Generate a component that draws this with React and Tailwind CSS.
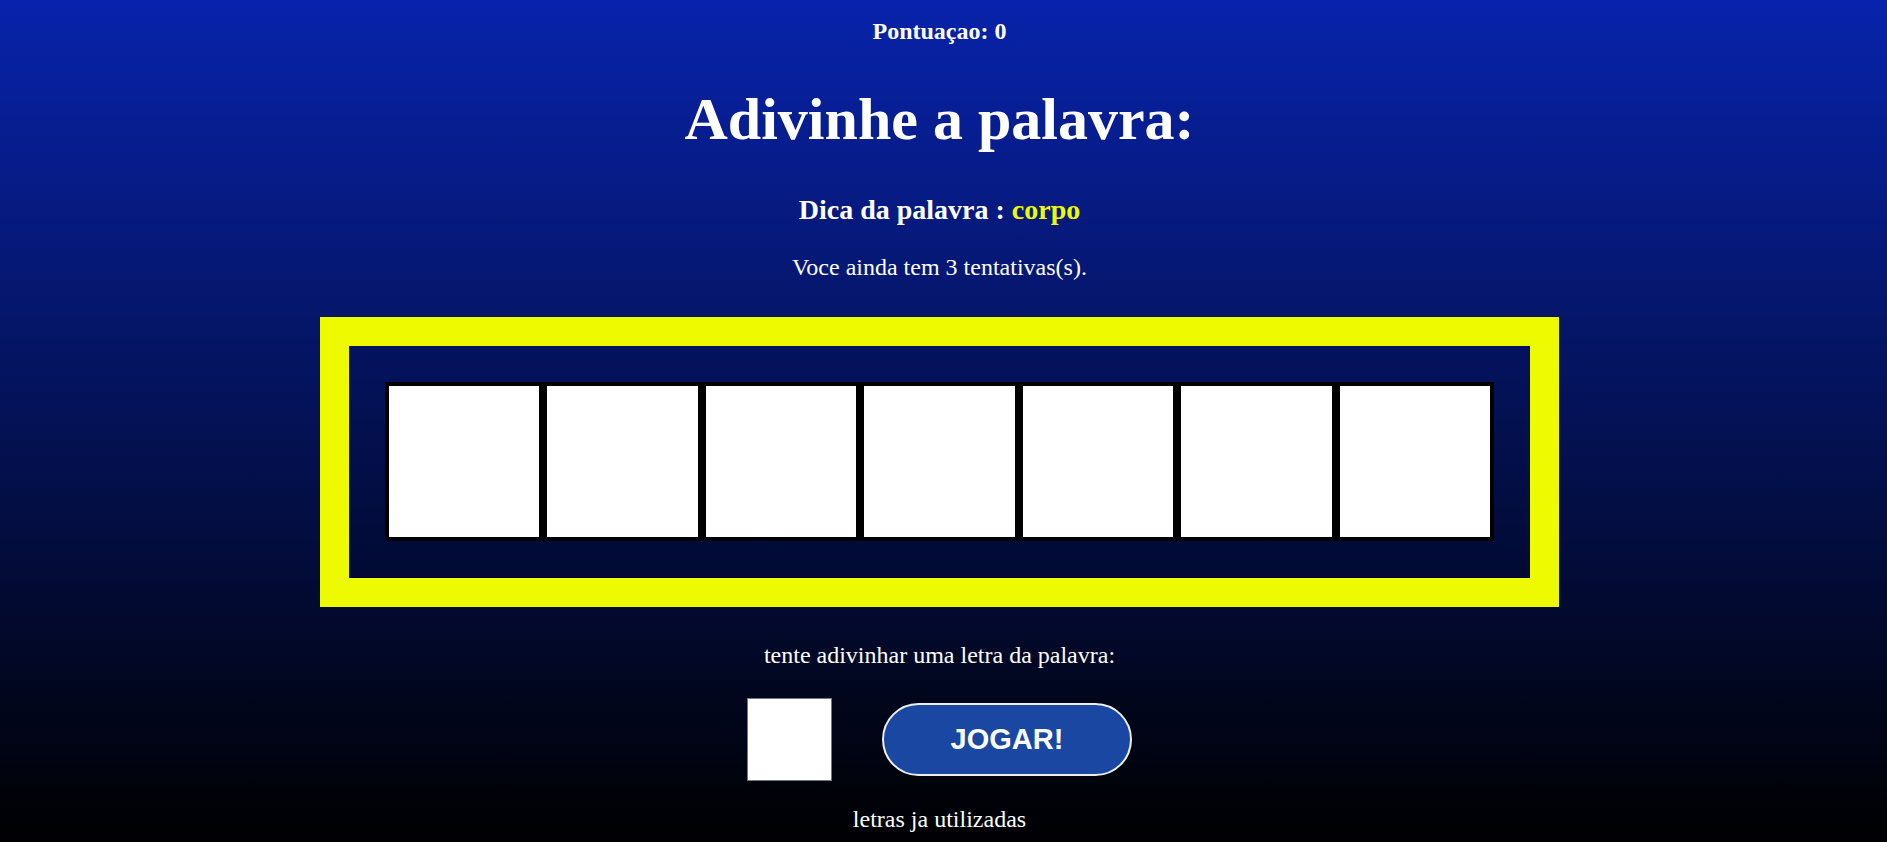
import { useState } from "react";

const palavra = "costela";
const dica = "corpo";

export default function App() {
  const [letra, setLetra] = useState("");
  const [usadas, setUsadas] = useState([]);
  const [tentativas, setTentativas] = useState(3);
  const [pontos, setPontos] = useState(0);

  const jogar = () => {
    const l = letra.toLowerCase();
    if (!l || usadas.includes(l)) return setLetra("");
    setUsadas([...usadas, l]);
    if (palavra.includes(l)) setPontos(pontos + 10);
    else setTentativas(tentativas - 1);
    setLetra("");
  };

  return (
    <div className="min-h-screen bg-[linear-gradient(#0823ab,#000)] pr-[8px] text-white font-['Liberation_Serif','Times_New_Roman',serif]">
      <div className="flex flex-col items-center">
        {/* cabecalho */}
        <p className="mt-[17px] text-[24px] leading-[28px] font-bold">Pontuaçao: {pontos}</p>
        <h1 className="mt-[39px] text-[60px] leading-[70px] font-bold">Adivinhe a palavra:</h1>
        <p className="mt-[40px] text-[28px] leading-[32px] font-bold">
          Dica da palavra : <span className="text-[#eefb00]">{dica}</span>
        </p>
        <p className="mt-[27px] text-[24px] leading-[28px]">
          Voce ainda tem {tentativas} tentativas(s).
        </p>

        {/* quadro da palavra */}
        <div className="mt-[36px] w-[1239px] border-[29px] border-[#eefb00]">
          <div className="bg-black/5 px-[36px] pt-[36px] pb-[37px]">
            <div className="flex h-[159px]">
              {palavra.split("").map((c, i) => (
                <div
                  key={i}
                  className="flex-1 border-4 border-black bg-white flex items-center justify-center text-black text-[80px] font-bold uppercase"
                >
                  {usadas.includes(c) ? c : ""}
                </div>
              ))}
            </div>
          </div>
        </div>

        <p className="mt-[34px] text-[24px] leading-[28px]">tente adivinhar uma letra da palavra:</p>

        <div className="mt-[29px] flex items-center gap-[50px]">
          <input
            type="text"
            maxLength="1"
            value={letra}
            onChange={(e) => setLetra(e.target.value)}
            className="w-[85px] h-[83px] bg-white border border-[#767676] text-black text-center text-[40px] outline-none"
          />
          <button
            type="button"
            onClick={jogar}
            className="w-[250px] h-[73px] rounded-full border-2 border-[#eeeeee] bg-[#1a47a1] text-white text-[29px] font-bold font-['Liberation_Sans',Arial,sans-serif]"
          >
            JOGAR!
          </button>
        </div>

        <p className="mt-[24px] text-[24px] leading-[28px]">letras ja utilizadas</p>
        <p className="text-[24px] leading-[28px] uppercase">{usadas.join(" ")}</p>
      </div>
    </div>
  );
}
